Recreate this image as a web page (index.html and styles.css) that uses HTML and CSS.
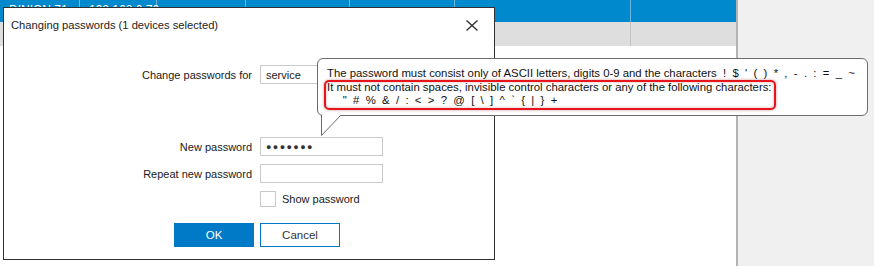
FILE: index.html
```html
<!DOCTYPE html>
<html>
<head>
<meta charset="utf-8">
<link rel="stylesheet" href="styles.css">
</head>
<body>
<div class="desk">
  <div class="grid">
    <div class="row sel">
      <div class="c w1">DINION 71</div><div class="c w2">192.168.0.70</div><div class="c w3"></div><div class="c w4"></div><div class="c w5"></div><div class="c w6"></div><div class="c w7"></div>
    </div>
    <div class="row alt">
      <div class="c w1"></div><div class="c w2"></div><div class="c w3"></div><div class="c w4"></div><div class="c w5"></div><div class="c w6"></div><div class="c w7"></div>
    </div>
  </div>
  <div class="side"></div>
</div>

<div class="dialog">
  <div class="titlebar">
    <span class="title">Changing passwords (1 devices selected)</span>
    <svg class="close" width="12" height="11" viewBox="0 0 12 11"><path d="M0.5 0.5 L11.5 10.5 M11.5 0.5 L0.5 10.5" stroke="#2b2b2b" stroke-width="1.3" fill="none"/></svg>
  </div>
  <div class="form">
    <label class="lbl">Change passwords for</label>
    <div class="field">service</div>
    <div class="spacer"></div><div class="spacer"></div>
    <label class="lbl">New password</label>
    <div class="field dots">●●●●●●●</div>
    <label class="lbl">Repeat new password</label>
    <div class="field"></div>
    <div></div>
    <div class="check"><span class="box"></span><span>Show password</span></div>
  </div>
  <div class="buttons">
    <button class="btn ok">OK</button>
    <button class="btn cancel">Cancel</button>
  </div>
</div>

<div class="tip">
  <div class="tip-line">The password must consist only of ASCII letters, digits 0-9 and the characters  !  $  '  (  )  *  ,  -  .  :  =  _  ~</div>
  <div class="tip-line">It must not contain spaces, invisible control characters or any of the following characters:</div>
  <div class="tip-line">     "  #  %  &amp;  /  :  &lt;  &gt;  ?  @  [  \  ]  ^  `  {  |  }  +</div>
  <div class="mark"></div>
  <svg class="tail" width="22" height="22" viewBox="0 0 22 22"><path d="M0.5 0 L0.5 20.5 L20 0" fill="#fff" stroke="#6b6b6b" stroke-width="1"/></svg>
</div>
</body>
</html>
```
FILE: styles.css
```css
* { box-sizing: border-box; }
html, body { margin: 0; padding: 0; }
body {
  width: 874px;
  height: 266px;
  overflow: hidden;
  font-family: "Liberation Sans", Arial, sans-serif;
  font-size: 11px;
  color: #1a1a1a;
  background: #fff;
  position: relative;
}
.desk { display: flex; height: 266px; }
.grid { width: 736px; background: #fff; }
.row { display: flex; }
.row.sel { height: 22px; background: #0089cd; color: #fff; }
.row.alt { height: 24px; background: #dedede; }
.c { border-right: 1px solid #c3c3c3; padding: 3px 0 0 9px; font-size: 12px; }
.row.sel .c { border-right-color: #6fb6e2; }
.w1 { width: 80px; }
.w2 { width: 77px; }
.w3 { width: 89px; }
.w4 { width: 104px; }
.w5 { width: 105px; }
.w6 { width: 176px; }
.w7 { width: 105px; border-right: none; }
.side { flex: 1; background: #f0f0f0; border-left: 2px solid #b3b3b3; }

.dialog {
  position: absolute;
  left: 3px;
  top: 7px;
  width: 492px;
  height: 253px;
  background: #fff;
  border: 1px solid #2e3034;
}
.titlebar {
  height: 36px;
  display: flex;
  align-items: center;
  justify-content: space-between;
  padding: 0 16px 2px 7px;
}
.title { font-size: 11.2px; color: #222; }
.close { display: block; }
.form {
  margin-top: 21px;
  display: grid;
  grid-template-columns: 248px 123px;
  column-gap: 8px;
  row-gap: 8px;
  align-items: center;
}
.lbl { text-align: right; color: #1a1a1a; }
.field {
  height: 19px;
  border: 1px solid #cacaca;
  padding: 2px 5px 0 5px;
  color: #1a1a1a;
  line-height: 14px;
}
.spacer { height: 37px; }
.field.dots { font-size: 9px; letter-spacing: 1.4px; color: #333; line-height: 15px; padding-left: 5px; }
.check { display: flex; align-items: center; gap: 6px; height: 15px; }
.box { width: 16px; height: 16px; border: 1px solid #c8c8c8; background: #fff; }
.buttons { display: flex; gap: 6px; padding-left: 170px; margin-top: 17px; }
.btn {
  width: 80px;
  height: 24px;
  font-family: "Liberation Sans", Arial, sans-serif;
  font-size: 11.5px;
  border: 1px solid #0078c8;
  padding: 0;
}
.btn.ok { background: #0079c6; color: #fff; }
.btn.cancel { background: #fff; color: #333; }

.tip {
  position: absolute;
  left: 317px;
  top: 58px;
  width: 551px;
  height: 58px;
  background: #fff;
  border: 1px solid #6b6b6b;
  border-radius: 6px;
  padding: 8px 0 0 9px;
  font-size: 11.35px;
  color: #111;
}
.tip-line { white-space: pre; line-height: 13.5px; }
.mark {
  position: absolute;
  left: 6px;
  top: 21px;
  width: 452px;
  height: 30px;
  border: 2px solid #e8141c;
  border-radius: 5px;
  box-shadow: 0 0 3px rgba(140, 20, 20, 0.45), inset 0 0 3px rgba(140, 20, 20, 0.35);
}
.tail {
  position: absolute;
  left: 3px;
  top: 56px;
  display: block;
}
```
